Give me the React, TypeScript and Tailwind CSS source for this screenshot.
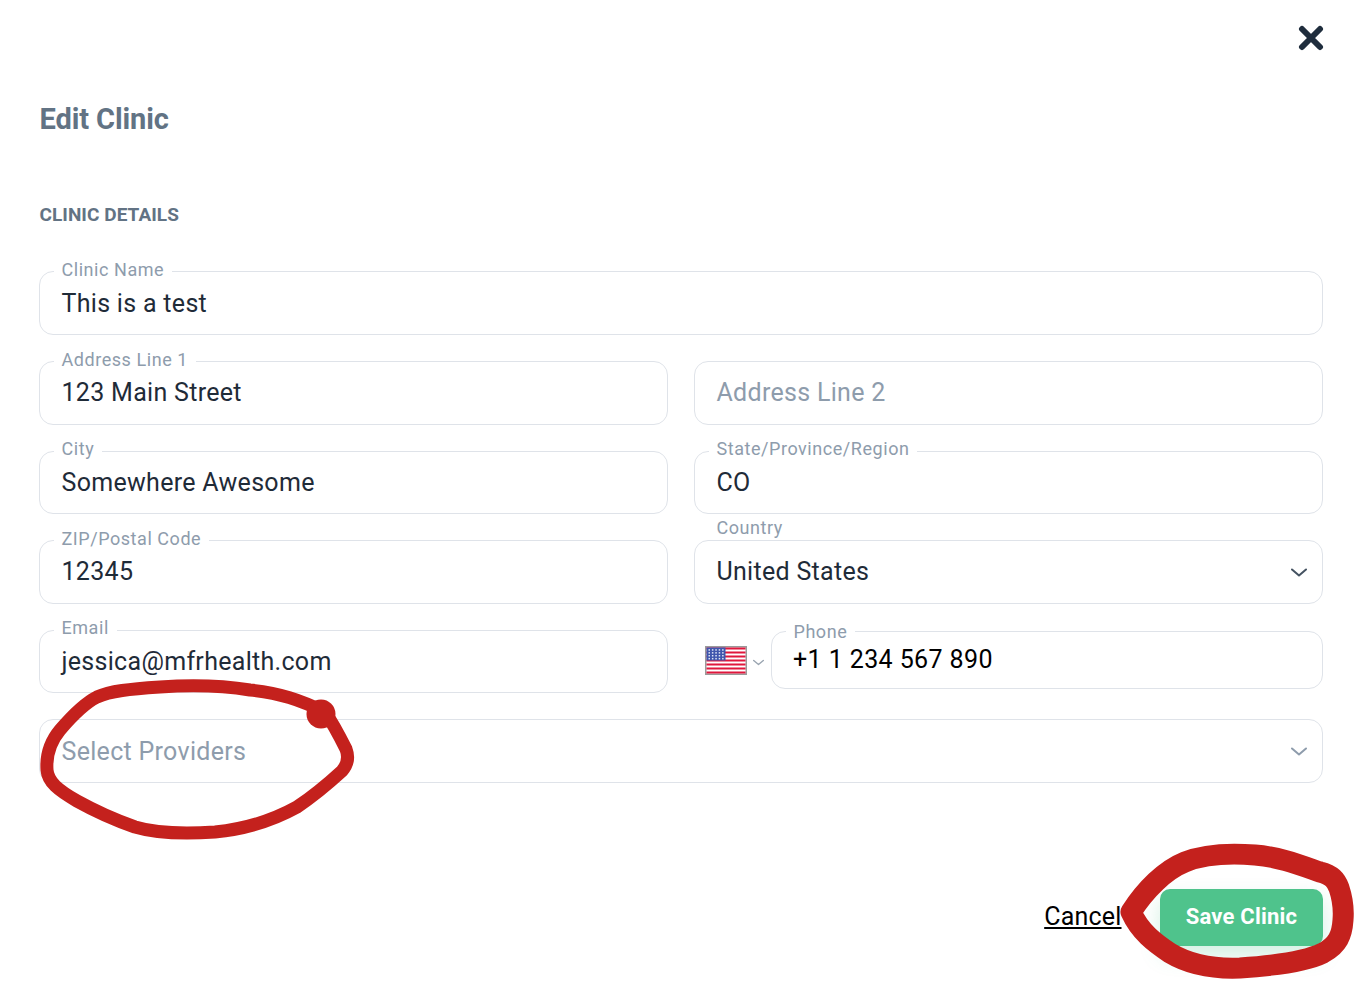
const font = { fontFamily: 'Roboto, sans-serif' }

function Chevron({ className = '' }: { className?: string }) {
  return (
    <svg viewBox="0 0 16 9" className={className} fill="none" stroke="currentColor" strokeWidth="2" strokeLinecap="round" strokeLinejoin="round">
      <path d="M1 1.5 8 7.5 15 1.5" />
    </svg>
  )
}

function Field({
  label,
  value,
  placeholder,
  select,
  className = '',
}: {
  label?: string
  value?: string
  placeholder?: string
  select?: boolean
  className?: string
}) {
  return (
    <div className={`relative flex h-[63.6px] items-center rounded-[14px] border border-[#dfe3e9] pl-[21.5px] pr-[15px] pt-[1px] ${className}`}>
      {label && (
        <span className={`absolute left-[13.5px] bg-white px-2 text-[18px] leading-[22px] tracking-[0.55px] text-[#8e9cac] ${select ? 'top-[-24px]' : 'top-[-13.4px]'}`}>
          {label}
        </span>
      )}
      <span className={`flex-1 text-[25px] leading-[32px] tracking-[0.3px] ${value ? 'text-[#1f2b38]' : 'text-[#8e9cac]'}`}>{value ?? placeholder}</span>
      {select && <Chevron className={`h-[9px] w-4 ${value ? 'text-[#445261]' : 'text-[#8e9cac]'}`} />}
    </div>
  )
}

function Flag() {
  const stripes = [0, 2, 4, 6, 8, 10, 12]
  return (
    <svg viewBox="0 0 42 29" className="mt-px h-[29px] w-[42px]">
      <rect width="42" height="29" fill="#9a9a9a" />
      <rect x="1.5" y="1.5" width="39" height="26" fill="#fff" />
      {stripes.map((s) => (
        <rect key={s} x="1.5" y={1.5 + s * 2} width="39" height="2" fill="#e0173c" />
      ))}
      <rect x="1.5" y="1.5" width="19" height="13" fill="#3f56ad" />
      {[0, 1, 2, 3].map((r) =>
        [0, 1, 2, 3, 4].map((c) => <rect key={`${r}-${c}`} x={3.5 + c * 3.4} y={3.2 + r * 2.9} width="1.5" height="1.5" fill="#dfe5f5" />),
      )}
    </svg>
  )
}

export default function App() {
  return (
    <div className="relative h-[982px] w-[1372px] overflow-hidden bg-white pl-[39px] pr-[49px]" style={font}>
      <div className="flex h-[101px] justify-end pt-[25px]">
        <svg viewBox="0 0 26 26" className="-mr-px h-[26px] w-[26px] text-[#1f2d3d]" fill="none" stroke="currentColor" strokeWidth="6" strokeLinecap="round">
          <path d="M4 4 22 22M22 4 4 22" />
        </svg>
      </div>
      <h1 className="pl-[0.5px] text-[29px] font-bold leading-[36px] tracking-[-0.1px] text-[#627384]">Edit Clinic</h1>
      <h2 className="mt-[66px] pl-[0.5px] text-[19px] font-bold leading-[24px] tracking-[0.05px] text-[#627384]">CLINIC DETAILS</h2>

      <div className="mt-[44.4px] grid grid-cols-2 gap-x-[26px] gap-y-[26px]">
        <Field className="col-span-2" label="Clinic Name" value="This is a test" />
        <Field label="Address Line 1" value="123 Main Street" />
        <Field placeholder="Address Line 2" />
        <Field label="City" value="Somewhere Awesome" />
        <Field label="State/Province/Region" value="CO" />
        <Field label="ZIP/Postal Code" value="12345" />
        <Field label="Country" value="United States" select />
        <Field label="Email" value="jessica@mfrhealth.com" />
        <div className="flex items-center pb-[3.4px] pl-[11px]">
          <Flag />
          <Chevron className="ml-[6px] mt-[6px] h-[7px] w-[11px] text-[#9aa5b1]" />
          <div className="relative ml-[7px] flex h-[58px] flex-1 items-center rounded-[14px] border border-[#dfe3e9] pl-[21px]">
            <span className="absolute left-[13.5px] top-[-11px] bg-white px-2 text-[18px] leading-[22px] tracking-[0.55px] text-[#8e9cac]">Phone</span>
            <span className="text-[25px] leading-[32px] tracking-[0.4px] text-black">+1 1 234 567 890</span>
          </div>
        </div>
        <Field className="col-span-2" placeholder="Select Providers" select />
      </div>

      <div className="mt-[106px] flex items-center justify-end">
        <a className="mr-[38.5px] text-[25px] leading-[32px] tracking-[0.2px] text-black underline">Cancel</a>
        <button className="h-[57px] w-[163px] rounded-[10px] bg-[#4fc38c] pb-[2px] text-[22px] font-bold tracking-[0.2px] text-white shadow-[0_10px_20px_rgba(79,195,140,0.25)]">
          Save Clinic
        </button>
      </div>

      <svg viewBox="0 0 1372 982" className="pointer-events-none absolute left-0 top-0 h-[982px] w-[1372px]" fill="none" stroke="#c4211d" strokeLinecap="round" strokeLinejoin="round">
        <path
          strokeWidth="13"
          d="M325 712C300 700 280 693 250 690C225 686 190 685 160 687C130 689 110 691 97 697C85 703 72 716 60 730C50 742 46 755 47 770C48 782 58 790 77 801C95 811 115 820 135 827C155 833 185 834 215 832C245 829 270 822 297 807C315 795 330 782 342 771C348 764 349 757 346 749C340 737 332 722 325 712Z"
        />
        <circle cx="321" cy="714" r="14.5" fill="#c4211d" stroke="none" />
        <path
          strokeWidth="21"
          d="M1131 912C1145 890 1165 870 1185 862C1205 854 1230 853 1255 855C1280 857 1300 865 1320 872C1332 875 1336 880 1339 888C1343 900 1344 908 1343 920C1342 935 1338 945 1323 953C1305 962 1270 966 1240 968C1215 969 1190 965 1170 953C1155 943 1140 932 1131 912Z"
        />
      </svg>
    </div>
  )
}
